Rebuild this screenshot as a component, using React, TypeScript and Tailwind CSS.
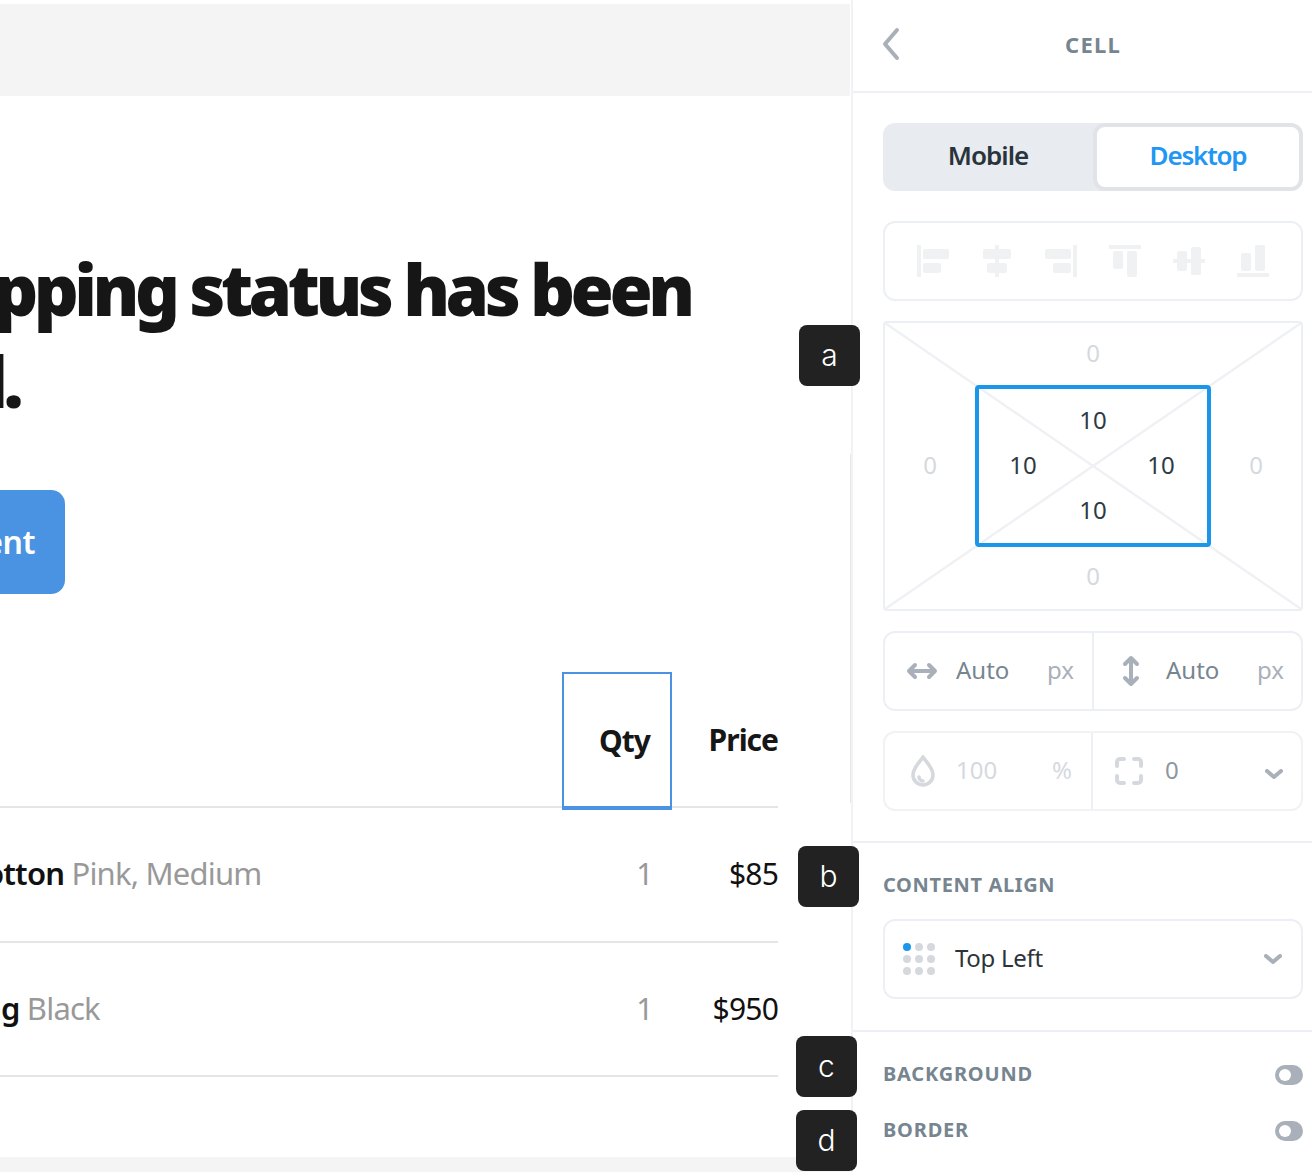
import React from "react";

const AlignIcon = ({ children }: { children: React.ReactNode }) => (
  <svg width="32" height="32" viewBox="0 0 32 32" fill="#f0f1f3">{children}</svg>
);

const Chevron = ({ cls = "" }: { cls?: string }) => (
  <svg className={cls} width="18" height="10" viewBox="0 0 18 10" fill="none" stroke="#a9b0b9" strokeWidth="4" strokeLinecap="round" strokeLinejoin="round">
    <path d="M2 2l7 6 7-6" />
  </svg>
);

const Toggle = () => (
  <div className="mt-[2px] flex h-5 w-7 items-center rounded-full bg-[#a9b0b9] pl-[4px]">
    <div className="h-3 w-3 rounded-full bg-white" />
  </div>
);

const Badge = ({ label, cls }: { label: string; cls: string }) => (
  <div className={`absolute flex h-[61px] w-[61px] items-center justify-center rounded-lg bg-[#222222] text-[30px] font-light text-white font-['Inter',sans-serif] ${cls}`}>
    {label}
  </div>
);

const Row = ({ name, note, cls, price }: { name: string; note: string; cls: string; price: string }) => (
  <div className={`flex items-center border-b-2 border-[#e5e5e5] pb-[2px] ${cls}`}>
    <div className="flex-1 whitespace-nowrap text-[31px] tracking-[-0.8px]">
      <span className="font-semibold text-[#111111]">{name}</span> <span className="text-[#999999]">{note}</span>
    </div>
    <div className="w-[88px] pr-[19px] text-right text-[30px] tracking-[-0.5px] text-[#999999]">1</div>
    <div className="w-[106px] text-right text-[30px] tracking-[-0.8px] text-[#111111]">{price}</div>
  </div>
);

export default function App() {
  return (
    <div className="relative flex h-[1172px] w-[1312px] overflow-hidden bg-white font-['Noto_Sans',sans-serif]">
      <div className="flex w-[851px] shrink-0 flex-col overflow-hidden">
        <div className="mt-1 h-[92px] w-[850px] shrink-0 bg-[#f4f4f4]" />
        <h1 className="ml-[-262px] mt-[147px] whitespace-nowrap text-[70px] font-black leading-[92px] tracking-[-4.5px] text-[#161616]">
          Your shipping status has been
          <br />
          <span className="ml-[-4px]">updated.</span>
        </h1>
        <div className="ml-[-235px] mt-[63px] flex h-[104px] w-[300px] shrink-0 items-center justify-end rounded-[14px] bg-[#4a93e3] pr-[30px] text-[32px] font-semibold tracking-[-0.5px] text-white">
          Track Shipment
        </div>
        <div className="w-[778px] shrink-0 pt-[78px]">
          <div className="flex h-[136px] items-end">
            <div className="h-full flex-1 border-b-2 border-[#e5e5e5]" />
            <div className="mb-[-2px] flex h-[138px] w-[110px] items-center justify-end border-2 border-b-4 border-[#4a93e3] pr-[20px] text-[30px] font-bold tracking-[-1px] text-[#161616]">
              Qty
            </div>
            <div className="flex h-full w-[106px] items-center justify-end border-b-2 border-[#e5e5e5] text-[30px] font-bold tracking-[-1px] text-[#161616]">
              Price
            </div>
          </div>
          <Row name="Cotton" note="Pink, Medium" cls="ml-[-34px] h-[135px]" price="$85" />
          <Row name="Bag" note="Black" cls="ml-[-36px] h-[134px]" price="$950" />
        </div>
        <div className="mt-auto h-[15px] w-[850px] shrink-0 bg-[#f4f4f4]" />
      </div>

      <div className="flex w-[461px] shrink-0 flex-col border-l-2 border-[#f1f2f4]">
        <div className="relative flex h-[93px] shrink-0 items-center justify-center border-b-2 border-[#eceff3] pb-[2px] pl-[21px]">
          <svg className="absolute left-[29px] top-[26px]" width="18" height="36" viewBox="0 0 18 36" fill="none" stroke="#a9b0b9" strokeWidth="4" strokeLinecap="round" strokeLinejoin="round">
            <path d="M15 4L3 18l12 14" />
          </svg>
          <span className="text-[22px] font-bold tracking-[1.2px] text-[#76858f]">CELL</span>
        </div>

        <div className="flex flex-col gap-5 border-b-2 border-[#eceff3] pb-[30px] pl-[30px] pr-[9px] pt-[30px]">
          <div className="flex h-[68px] overflow-hidden rounded-xl bg-[#e8ebef]">
            <div className="flex flex-1 items-center justify-center pb-[4px] text-[26px] font-semibold tracking-[-1px] text-[#28343c]">Mobile</div>
            <div className="flex w-[210px] items-center justify-center rounded-xl border-4 border-[#e0e3e8] bg-white pb-[4px] text-[26px] font-semibold tracking-[-1.2px] text-[#2196f3]">Desktop</div>
          </div>

          <div className="mt-[10px] flex h-20 items-center justify-center gap-8 rounded-xl border-2 border-[#eceff3]">
            <AlignIcon><rect x="0" y="0" width="4" height="32" /><rect x="6" y="4" width="26" height="10" rx="2" /><rect x="6" y="18" width="18" height="10" rx="2" /></AlignIcon>
            <AlignIcon><rect x="14" y="0" width="4" height="32" /><rect x="2" y="4" width="28" height="10" rx="2" /><rect x="6" y="18" width="20" height="10" rx="2" /></AlignIcon>
            <AlignIcon><rect x="28" y="0" width="4" height="32" /><rect x="0" y="4" width="26" height="10" rx="2" /><rect x="8" y="18" width="18" height="10" rx="2" /></AlignIcon>
            <AlignIcon><rect x="0" y="0" width="32" height="4" /><rect x="4" y="6" width="10" height="18" rx="2" /><rect x="18" y="6" width="10" height="26" rx="2" /></AlignIcon>
            <AlignIcon><rect x="0" y="14" width="32" height="4" /><rect x="4" y="6" width="10" height="20" rx="2" /><rect x="18" y="2" width="10" height="28" rx="2" /></AlignIcon>
            <AlignIcon><rect x="0" y="28" width="32" height="4" /><rect x="4" y="8" width="10" height="18" rx="2" /><rect x="18" y="0" width="10" height="26" rx="2" /></AlignIcon>
          </div>

          <div className="relative grid h-[290px] grid-cols-[90px_236px_90px] grid-rows-[62px_162px_62px] place-items-center rounded border-2 border-[#eceff3] text-[24px] text-[#d5d9de]">
            <svg className="absolute inset-0 h-full w-full" viewBox="0 0 416 286" preserveAspectRatio="none" fill="none" stroke="#f0f1f4" strokeWidth="2.5">
              <path d="M0 0L416 286M416 0L0 286" />
            </svg>
            <div className="col-start-2 row-start-1 pb-[2px]">0</div>
            <div className="col-start-1 row-start-2 pb-[2px]">0</div>
            <div className="relative col-start-2 row-start-2 grid h-[162px] w-[236px] grid-cols-[88px_52px_84px] grid-rows-[62px_30px_62px] place-items-center rounded border-4 border-[#1a96ea] text-[#2d3a44]">
              <div className="col-start-2 row-start-1">10</div>
              <div className="col-start-1 row-start-2 pb-[2px]">10</div>
              <div className="col-start-3 row-start-2 pb-[2px]">10</div>
              <div className="col-start-2 row-start-3 pb-[4px]">10</div>
            </div>
            <div className="col-start-3 row-start-2 pb-[2px]">0</div>
            <div className="col-start-2 row-start-3 pb-[4px]">0</div>
          </div>

          <div className="flex h-20 rounded-xl border-2 border-[#eceff3] text-[24px]">
            <div className="flex w-[209px] items-center border-r-2 border-[#eceff3] pl-[21px] pr-[18px]">
              <svg width="32" height="18" viewBox="0 0 32 18" fill="none" stroke="#a9b0b9" strokeWidth="4" strokeLinecap="round" strokeLinejoin="round">
                <path d="M3 9h26M9 3L3 9l6 6M23 3l6 6-6 6" />
              </svg>
              <span className="mb-[2px] ml-[18px] text-[#76858f]">Auto</span>
              <span className="mb-[2px] ml-auto text-[#a9b0b9]">px</span>
            </div>
            <div className="flex flex-1 items-center pl-[28px] pr-[17px]">
              <svg width="18" height="32" viewBox="0 0 18 32" fill="none" stroke="#a9b0b9" strokeWidth="4" strokeLinecap="round" strokeLinejoin="round">
                <path d="M9 3v26M3 9l6-6 6 6M3 23l6 6 6-6" />
              </svg>
              <span className="mb-[2px] ml-[26px] text-[#76858f]">Auto</span>
              <span className="mb-[2px] ml-auto text-[#a9b0b9]">px</span>
            </div>
          </div>

          <div className="flex h-20 rounded-xl border-2 border-[#f1f2f4] text-[24px]">
            <div className="flex w-[208px] items-center border-r-2 border-[#eceff3] pl-[26px] pr-[19px]">
              <svg width="24" height="32" viewBox="0 0 24 32" fill="none" stroke="#d5d9de" strokeWidth="3.6" strokeLinecap="round" strokeLinejoin="round">
                <path d="M12 2c4 6 10 11 10 18a10 10 0 0 1-20 0C2 13 8 8 12 2z" />
                <path d="M8 22a4 4 0 0 0 4 4" />
              </svg>
              <span className="mb-[2px] ml-[21px] text-[#d5d9de]">100</span>
              <span className="mb-[2px] ml-auto text-[#d5d9de]">%</span>
            </div>
            <div className="flex flex-1 items-center pl-[22px] pr-[18px]">
              <svg width="28" height="28" viewBox="0 0 28 28" fill="none" stroke="#d5d9de" strokeWidth="4" strokeLinecap="round" strokeLinejoin="round">
                <path d="M2 9V5a3 3 0 0 1 3-3h4M19 2h4a3 3 0 0 1 3 3v4M26 19v4a3 3 0 0 1-3 3h-4M9 26H5a3 3 0 0 1-3-3v-4" />
              </svg>
              <span className="mb-[2px] ml-[22px] text-[#8d979f]">0</span>
              <span className="ml-auto"><Chevron cls="mt-[6px]" /></span>
            </div>
          </div>
        </div>

        <div className="flex flex-col border-b-2 border-[#eceff3] pb-[31px] pl-[30px] pr-[9px] pt-[28px]">
          <div className="text-[20px] font-bold leading-[28px] tracking-[0.65px] text-[#76858f]">CONTENT ALIGN</div>
          <div className="mt-[20px] flex h-20 items-center rounded-xl border-2 border-[#eceff3] pl-[18px] pr-[19px]">
            <div className="grid grid-cols-3 gap-1">
              <div className="h-2 w-2 rounded-full bg-[#1a96ea]" />
              {[0, 1, 2, 3, 4, 5, 6, 7].map((i) => (
                <div key={i} className="h-2 w-2 rounded-full bg-[#d5d9de]" />
              ))}
            </div>
            <span className="mb-[2px] ml-[20px] text-[24px] tracking-[-0.3px] text-[#2d3338]">Top Left</span>
            <span className="ml-auto"><Chevron /></span>
          </div>
        </div>

        <div className="flex items-center justify-between pl-[30px] pr-[9px] pt-[28px]">
          <span className="text-[20px] font-bold leading-[28px] tracking-[0.8px] text-[#76858f]">BACKGROUND</span>
          <Toggle />
        </div>
        <div className="flex items-center justify-between pl-[30px] pr-[9px] pt-[28px]">
          <span className="text-[20px] font-bold leading-[28px] tracking-[0.8px] text-[#76858f]">BORDER</span>
          <Toggle />
        </div>
      </div>

      <div className="absolute left-[850px] top-[454px] h-[349px] w-px bg-[#e8e8e8]" />
      <Badge label="a" cls="left-[799px] top-[325px]" />
      <Badge label="b" cls="left-[798px] top-[846px]" />
      <Badge label="c" cls="left-[796px] top-[1036px]" />
      <Badge label="d" cls="left-[796px] top-[1110px]" />
    </div>
  );
}
